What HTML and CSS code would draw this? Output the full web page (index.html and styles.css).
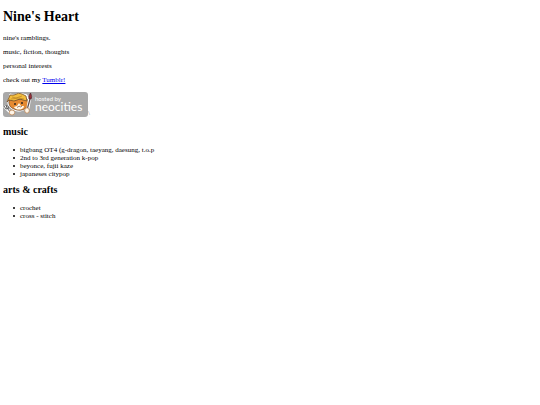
FILE: index.html
```html
<!DOCTYPE html>
<html lang="en">
<head>
<meta charset="utf-8">
<meta name="viewport" content="width=device-width, initial-scale=1">
<title>Nine's Heart</title>
<link rel="stylesheet" href="styles.css">
</head>
<body>
<h1>Nine's Heart</h1>
<p>nine's ramblings.</p>
<p>music, fiction, thoughts</p>
<p>personal interests</p>
<p>check out my <a href="#tumblr">Tumblr!</a></p>
<div class="badge">
<svg class="logo" viewBox="0 0 85 25" role="img" aria-label="Hosted by Neocities">
  <rect width="85" height="25" rx="3" fill="#a9a9a9"/>
  <!-- fork -->
  <path d="M2 15l6 6" stroke="#fff" stroke-width="3" stroke-linecap="round"/>
  <path d="M1 14l2 3 3-1-1-3M3 13l1 3 4 5" fill="none" stroke="#5c5c5c" stroke-width="1"/>
  <!-- cat -->
  <path d="M6 6L7 2l4 1Q16 0 20 2l4 1 1 5q1 5-2 8-5 5-12 2Q4 15 5 9z" fill="#fff" stroke="#fff" stroke-width="1"/>
  <path d="M6 8q-1 7 5 9 7 3 12-1 4-4 1-9z" fill="#e58a31" stroke="#65452c" stroke-width=".7"/>
  <path d="M11 15l3-1 2-3 2 3 3 0q0 2-2 3-4 1-6 0-2-1-2-2z" fill="#fff8e9"/>
  <path d="M5 8l2-5 4 0q5-3 8-1l4 2 1 5-4-1-3-1-6 2-5-1-2 2z" fill="#f2bd3d" stroke="#76502b" stroke-width=".8"/>
  <path d="M9 5l4 1 6-2M8 7l8-1 5 1" fill="none" stroke="#b98226" stroke-width=".7"/>
  <circle cx="12" cy="12" r="1" fill="#30251f"/><circle cx="19" cy="11" r="1" fill="#30251f"/>
  <path d="M14 15q1 1 2-1 2 2 3 0" fill="none" stroke="#5b3021" stroke-width=".6"/>
  <!-- brush -->
  <path d="M25 16l2-12" stroke="#fff" stroke-width="3" stroke-linecap="round"/>
  <path d="M24 18l3-11" stroke="#5b4a49" stroke-width="1.2"/>
  <path d="M26 7q-1-3 1.500-6 2 4 .5 6z" fill="#9d3038" stroke="#572a32" stroke-width=".8"/>
  <ellipse cx="9" cy="20.500" rx="2.700" ry="2.500" fill="#fff6e9" stroke="#b87d48" stroke-width=".7"/>
  <ellipse cx="24" cy="18.500" rx="2.300" ry="2.700" fill="#fff6e9" stroke="#b87d48" stroke-width=".7"/>
  <text class="hosted" x="32" y="9">hosted by</text>
  <text class="name" x="32" y="19">neocities</text>
</svg><span class="mark">\</span>
</div>
<h2>music</h2>
<ul>
<li>bigbang OT4 (g-dragon, taeyang, daesung, t.o.p</li>
<li>2nd to 3rd generation k-pop</li>
<li>beyonce, fujii kaze</li>
<li>japaneses citypop</li>
</ul>
<h2>arts &amp; crafts</h2>
<ul>
<li>crochet</li>
<li>cross - stitch</li>
</ul>
</body>
</html>
```

FILE: styles.css
```css
body {
  margin: 9px 3px;
  background: #fff;
  color: #000;
  font-family: "Liberation Serif", "Times New Roman", serif;
  font-size: 7px;
  line-height: 8px;
}
h1 {
  margin: 0 0 9px;
  font-size: 14px;
  line-height: 16px;
}
h2 {
  margin: 9px 0 8px;
  font-size: 10px;
  line-height: 12px;
}
p {
  margin: 6px 0;
}
a {
  color: #0000ee;
}
ul {
  margin: 8px 0 6px;
  padding-left: 10px;
  list-style: none;
}
li {
  display: flex;
  align-items: center;
  gap: 5px;
}
li::before {
  content: "";
  width: 2px;
  height: 2px;
  border-radius: 1px;
  background: #000;
}
ul + h2 {
  margin-top: 6px;
}
.badge {
  display: flex;
  align-items: flex-end;
  margin-top: 8px;
}
.logo {
  width: 85px;
  height: 25px;
}
.mark {
  color: #888;
  font-size: 7px;
}
.hosted {
  fill: #fff;
  font: 6px Lato, sans-serif;
}
.name {
  fill: #fff;
  font: 12px Lato, sans-serif;
}
```
